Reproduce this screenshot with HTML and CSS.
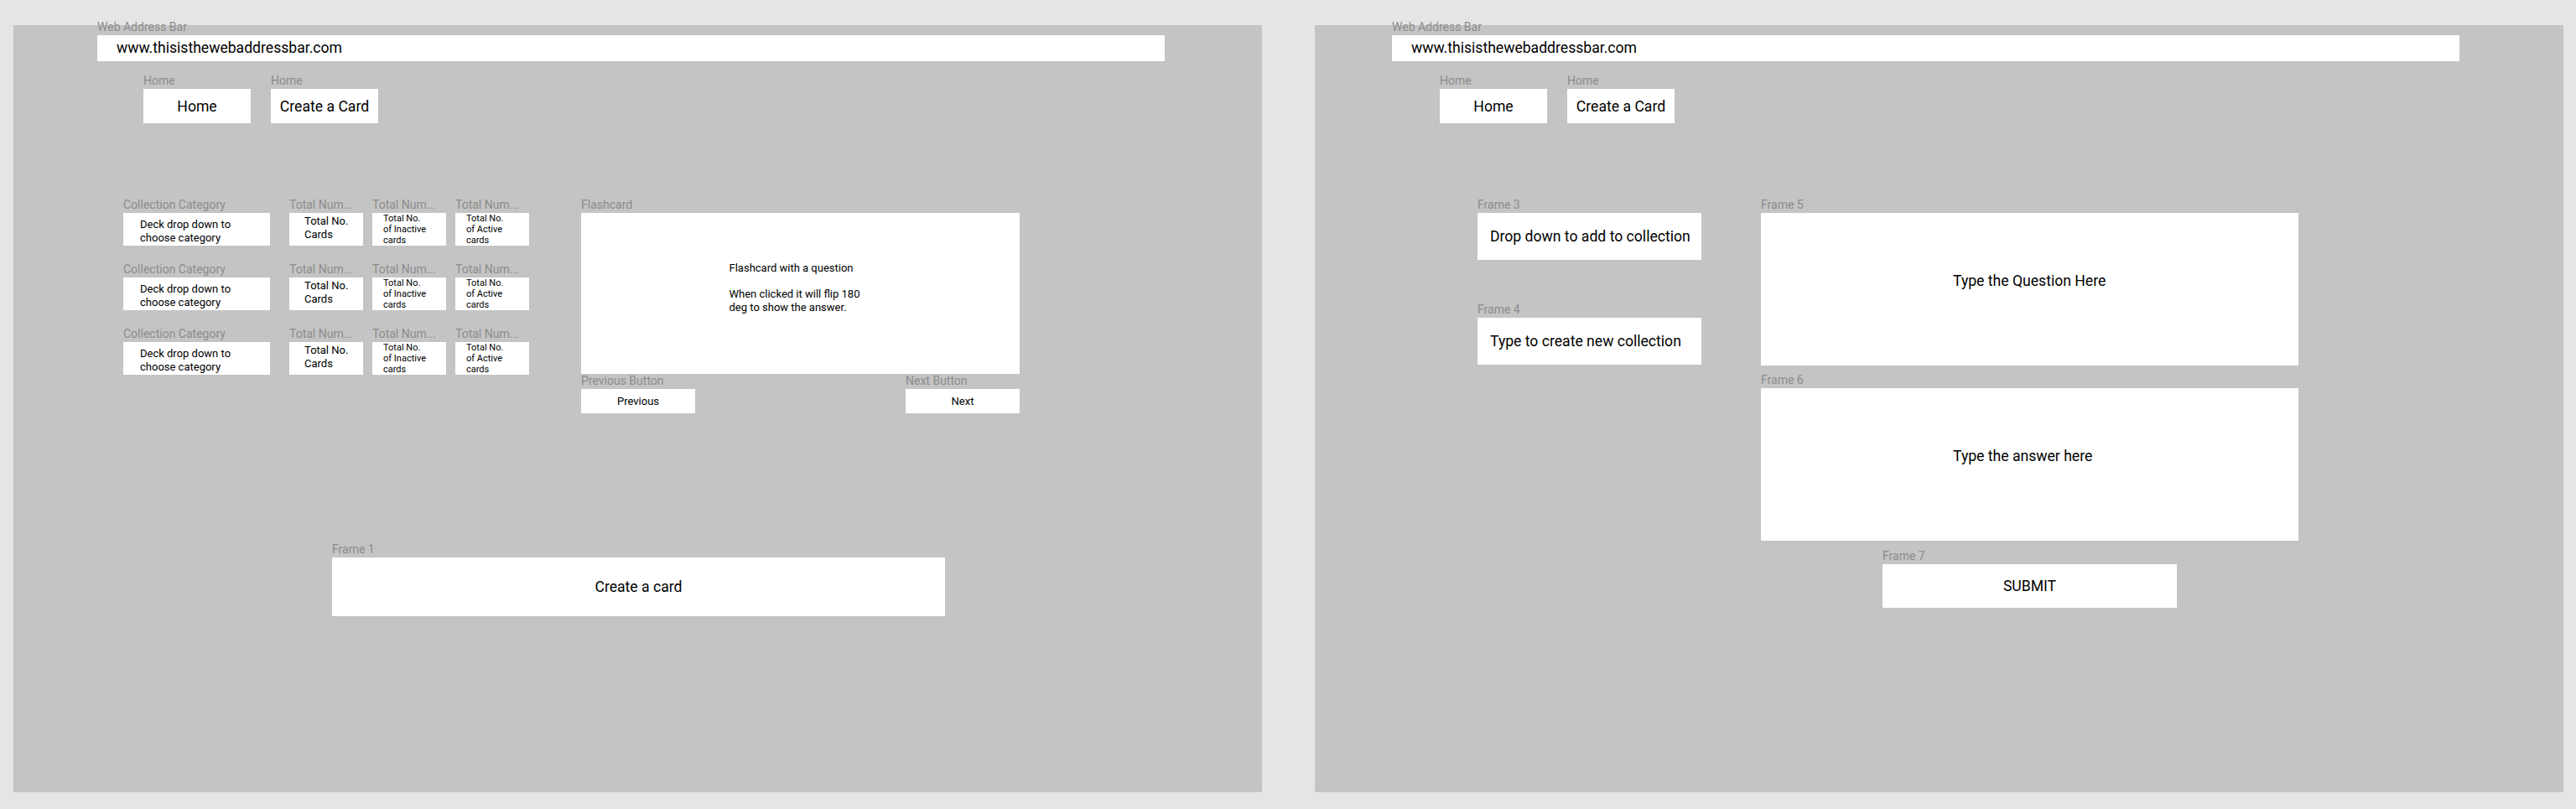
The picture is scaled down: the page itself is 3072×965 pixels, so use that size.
FILE: index.html
```
<!DOCTYPE html>
<html>
<head>
<meta charset="utf-8">
<title>Flashcards wireframe</title>
<link rel="stylesheet" href="styles.css">
</head>
<body>
<div class="canvas">
  <section class="frame frame-a">
    <div class="addr">
      <div class="lbl">Web Address Bar</div>
      <div class="bar">www.thisisthewebaddressbar.com</div>
    </div>
    <nav class="nav">
      <div class="nav-item"><div class="lbl">Home</div><div class="box nav-btn">Home</div></div>
      <div class="nav-item"><div class="lbl">Home</div><div class="box nav-btn">Create a Card</div></div>
    </nav>
    <div class="main-a">
      <div class="decks">
        <div class="deck-row">
          <div class="cell cell-deck"><div class="lbl">Collection Category</div><div class="box deck">Deck drop down to<br>choose category</div></div>
          <div class="cell cell-stat"><div class="lbl">Total Num...</div><div class="box stat">Total No.<br>Cards</div></div>
          <div class="cell cell-stat"><div class="lbl">Total Num...</div><div class="box stat-sm">Total No.<br>of Inactive<br>cards</div></div>
          <div class="cell cell-stat"><div class="lbl">Total Num...</div><div class="box stat-sm">Total No.<br>of Active<br>cards</div></div>
        </div>
        <div class="deck-row">
          <div class="cell cell-deck"><div class="lbl">Collection Category</div><div class="box deck">Deck drop down to<br>choose category</div></div>
          <div class="cell cell-stat"><div class="lbl">Total Num...</div><div class="box stat">Total No.<br>Cards</div></div>
          <div class="cell cell-stat"><div class="lbl">Total Num...</div><div class="box stat-sm">Total No.<br>of Inactive<br>cards</div></div>
          <div class="cell cell-stat"><div class="lbl">Total Num...</div><div class="box stat-sm">Total No.<br>of Active<br>cards</div></div>
        </div>
        <div class="deck-row">
          <div class="cell cell-deck"><div class="lbl">Collection Category</div><div class="box deck">Deck drop down to<br>choose category</div></div>
          <div class="cell cell-stat"><div class="lbl">Total Num...</div><div class="box stat">Total No.<br>Cards</div></div>
          <div class="cell cell-stat"><div class="lbl">Total Num...</div><div class="box stat-sm">Total No.<br>of Inactive<br>cards</div></div>
          <div class="cell cell-stat"><div class="lbl">Total Num...</div><div class="box stat-sm">Total No.<br>of Active<br>cards</div></div>
        </div>
      </div>
      <div class="flash">
        <div class="lbl">Flashcard</div>
        <div class="box flash-card">
          <div class="flash-text">Flashcard with a question<br><br>When clicked it will flip 180<br>deg to show the answer.</div>
        </div>
        <div class="flash-nav">
          <div class="cell"><div class="lbl">Previous Button</div><div class="box flash-btn">Previous</div></div>
          <div class="cell"><div class="lbl">Next Button</div><div class="box flash-btn">Next</div></div>
        </div>
      </div>
    </div>
    <div class="create">
      <div class="lbl">Frame 1</div>
      <div class="box create-btn">Create a card</div>
    </div>
  </section>

  <section class="frame frame-b">
    <div class="addr">
      <div class="lbl">Web Address Bar</div>
      <div class="bar">www.thisisthewebaddressbar.com</div>
    </div>
    <nav class="nav nav-b">
      <div class="nav-item"><div class="lbl">Home</div><div class="box nav-btn">Home</div></div>
      <div class="nav-item"><div class="lbl">Home</div><div class="box nav-btn">Create a Card</div></div>
    </nav>
    <div class="main-b">
      <div class="col-left">
        <div class="cell"><div class="lbl">Frame 3</div><div class="box field">Drop down to add to collection</div></div>
        <div class="cell frame4"><div class="lbl">Frame 4</div><div class="box field">Type to create new collection</div></div>
      </div>
      <div class="col-right">
        <div class="cell"><div class="lbl">Frame 5</div><div class="box area">Type the Question Here</div></div>
        <div class="cell frame6"><div class="lbl">Frame 6</div><div class="box area">Type the answer here</div></div>
        <div class="cell submit-cell"><div class="lbl">Frame 7</div><div class="box submit">SUBMIT</div></div>
      </div>
    </div>
  </section>
</div>
</body>
</html>
```

FILE: styles.css
```
* { box-sizing: border-box; }

html, body {
  margin: 0;
  padding: 0;
}

body {
  background: #e5e5e5;
  font-family: Roboto, "Liberation Sans", Arial, sans-serif;
  color: #000;
  width: 3072px;
  height: 965px;
  overflow: hidden;
}

.canvas {
  display: flex;
  gap: 63px;
  padding: 30px 0 0 16px;
}

.frame {
  width: 1489px;
  height: 915px;
  background: #c4c4c4;
  display: flex;
  flex-direction: column;
  align-items: flex-start;
}

.frame-a { padding-left: 100px; }
.frame-b { padding-left: 92px; }

.lbl {
  font-size: 14px;
  line-height: 16px;
  height: 16px;
  margin-bottom: 2px;
  color: #8c8c8c;
  white-space: nowrap;
  overflow: hidden;
  text-overflow: ellipsis;
}

.box {
  background: #fff;
}

/* address bar */
.addr { margin-top: -6px; }

.bar {
  width: 1273px;
  height: 31px;
  padding-left: 23px;
  font-size: 17.6px;
  line-height: 31px;
  background: #fff;
}

/* nav */
.nav {
  display: flex;
  gap: 24px;
  margin-top: 15px;
  margin-left: 55px;
}
.nav-b { margin-left: 57px; }

.nav-btn {
  width: 128px;
  height: 41px;
  display: flex;
  align-items: center;
  justify-content: center;
  font-size: 17.6px;
}

/* left frame main area */
.main-a {
  display: flex;
  gap: 62px;
  margin-top: 89px;
  margin-left: 31px;
}

.decks {
  display: flex;
  flex-direction: column;
  gap: 20px;
}

.deck-row {
  display: flex;
  gap: 11px;
}

.cell-deck {
  width: 175px;
  margin-right: 12px;
}

.cell-stat { width: 88px; }

.deck {
  height: 39px;
  padding: 6px 0 0 20px;
  font-size: 13px;
  line-height: 15.5px;
}

.stat {
  height: 39px;
  padding: 2px 0 0 18px;
  font-size: 13px;
  line-height: 16px;
}

.stat-sm {
  height: 39px;
  padding: 0 0 0 13px;
  font-size: 11px;
  line-height: 13px;
  overflow: hidden;
}

.flash { width: 523px; }

.flash-card {
  height: 192px;
  display: flex;
  align-items: center;
  justify-content: center;
  padding: 0 0 14px 0;
}

.flash-text {
  font-size: 13px;
  line-height: 15.5px;
  width: 170px;
}

.flash-nav {
  display: flex;
  justify-content: space-between;
}

.flash-btn {
  width: 136px;
  height: 29px;
  display: flex;
  align-items: center;
  justify-content: center;
  font-size: 13px;
}

.create {
  margin-top: 154px;
  margin-left: 280px;
}

.create-btn {
  width: 731px;
  height: 70px;
  display: flex;
  align-items: center;
  justify-content: center;
  font-size: 17.6px;
}

/* right frame */
.main-b {
  display: flex;
  gap: 71px;
  margin-top: 89px;
  margin-left: 102px;
}

.col-left { width: 267px; }
.frame4 { margin-top: 51px; }

.field {
  height: 56px;
  display: flex;
  align-items: center;
  padding-left: 15px;
  font-size: 17.6px;
}

.col-right {
  width: 641px;
  display: flex;
  flex-direction: column;
}

.area {
  height: 182px;
  display: flex;
  align-items: center;
  padding: 0 0 20px 229px;
  font-size: 17.6px;
}

.frame6 { margin-top: 9px; }

.submit-cell {
  margin-top: 10px;
  align-self: center;
}

.submit {
  width: 351px;
  height: 52px;
  display: flex;
  align-items: center;
  justify-content: center;
  font-size: 17.6px;
}
```
